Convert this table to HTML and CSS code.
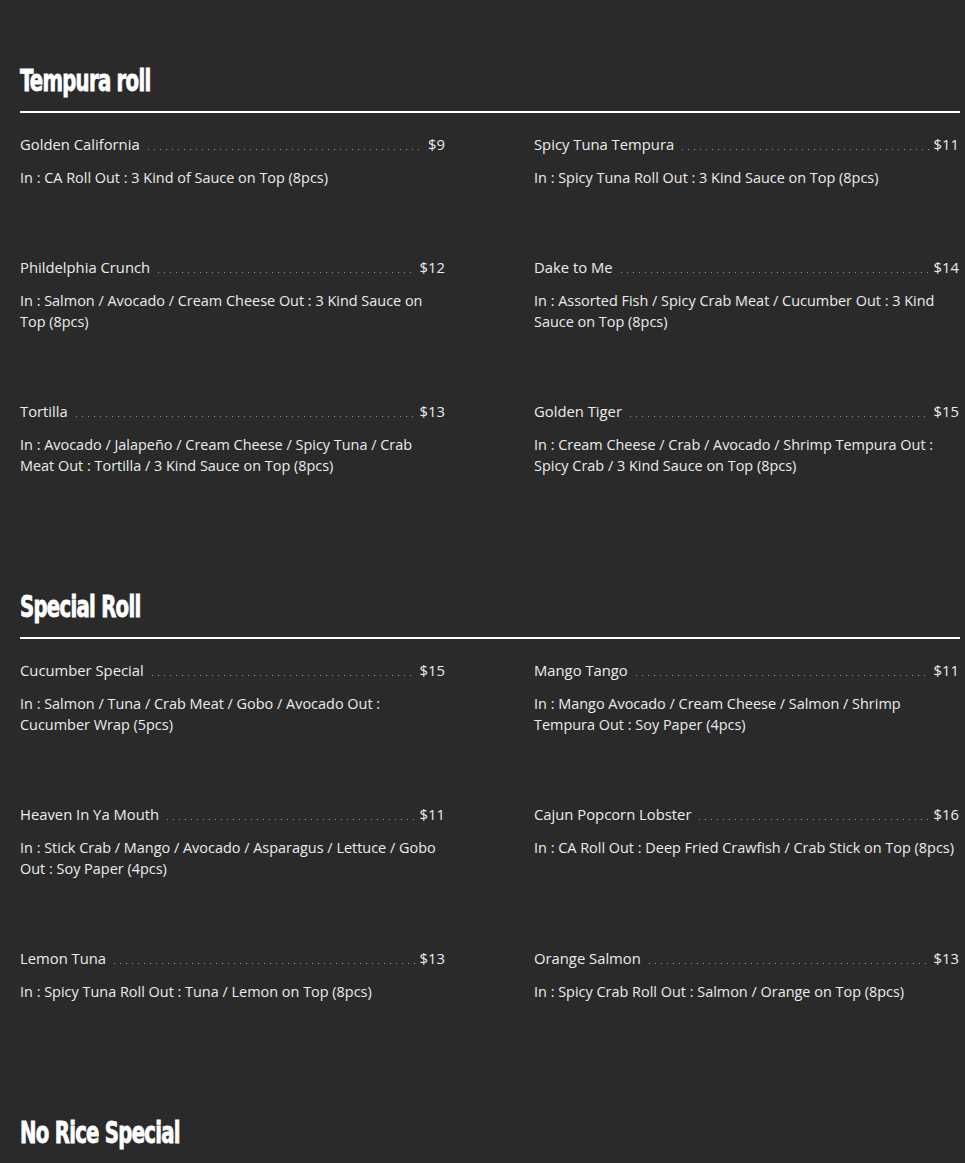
FILE: index.html
```html
<!DOCTYPE html>
<html lang="en">
<head>
  <meta charset="UTF-8">
  <title>Menu</title>
  <link rel="stylesheet" href="styles.css">
</head>
<body>
  <div class="menu">

    <!-- Tempura roll -->
    <section class="section">
      <h2 class="section-title"><span class="title-text">Tempura roll</span></h2>
      <div class="items">
        <div class="item">
          <div class="item-head"><span class="name">Golden California</span><span class="dots"></span><span class="price">$9</span></div>
          <p class="desc">In : CA Roll Out : 3 Kind of Sauce on Top (8pcs)</p>
        </div>
        <div class="item">
          <div class="item-head"><span class="name">Spicy Tuna Tempura</span><span class="dots"></span><span class="price">$11</span></div>
          <p class="desc">In : Spicy Tuna Roll Out : 3 Kind Sauce on Top (8pcs)</p>
        </div>
        <div class="item">
          <div class="item-head"><span class="name">Phildelphia Crunch</span><span class="dots"></span><span class="price">$12</span></div>
          <p class="desc">In : Salmon / Avocado / Cream Cheese Out : 3 Kind Sauce on Top (8pcs)</p>
        </div>
        <div class="item">
          <div class="item-head"><span class="name">Dake to Me</span><span class="dots"></span><span class="price">$14</span></div>
          <p class="desc">In : Assorted Fish / Spicy Crab Meat / Cucumber Out : 3 Kind Sauce on Top (8pcs)</p>
        </div>
        <div class="item">
          <div class="item-head"><span class="name">Tortilla</span><span class="dots"></span><span class="price">$13</span></div>
          <p class="desc">In : Avocado / Jalapeño / Cream Cheese / Spicy Tuna / Crab Meat Out : Tortilla / 3 Kind Sauce on Top (8pcs)</p>
        </div>
        <div class="item">
          <div class="item-head"><span class="name">Golden Tiger</span><span class="dots"></span><span class="price">$15</span></div>
          <p class="desc">In : Cream Cheese / Crab / Avocado / Shrimp Tempura Out : Spicy Crab / 3 Kind Sauce on Top (8pcs)</p>
        </div>
      </div>
    </section>

    <!-- Special Roll -->
    <section class="section">
      <h2 class="section-title"><span class="title-text">Special Roll</span></h2>
      <div class="items">
        <div class="item">
          <div class="item-head"><span class="name">Cucumber Special</span><span class="dots"></span><span class="price">$15</span></div>
          <p class="desc">In : Salmon / Tuna / Crab Meat / Gobo / Avocado Out : Cucumber Wrap (5pcs)</p>
        </div>
        <div class="item">
          <div class="item-head"><span class="name">Mango Tango</span><span class="dots"></span><span class="price">$11</span></div>
          <p class="desc">In : Mango Avocado / Cream Cheese / Salmon / Shrimp Tempura Out : Soy Paper (4pcs)</p>
        </div>
        <div class="item">
          <div class="item-head"><span class="name">Heaven In Ya Mouth</span><span class="dots"></span><span class="price">$11</span></div>
          <p class="desc">In : Stick Crab / Mango / Avocado / Asparagus / Lettuce / Gobo Out : Soy Paper (4pcs)</p>
        </div>
        <div class="item">
          <div class="item-head"><span class="name">Cajun Popcorn Lobster</span><span class="dots"></span><span class="price">$16</span></div>
          <p class="desc">In : CA Roll Out : Deep Fried Crawfish / Crab Stick on Top (8pcs)</p>
        </div>
        <div class="item">
          <div class="item-head"><span class="name">Lemon Tuna</span><span class="dots"></span><span class="price">$13</span></div>
          <p class="desc">In : Spicy Tuna Roll Out : Tuna / Lemon on Top (8pcs)</p>
        </div>
        <div class="item">
          <div class="item-head"><span class="name">Orange Salmon</span><span class="dots"></span><span class="price">$13</span></div>
          <p class="desc">In : Spicy Crab Roll Out : Salmon / Orange on Top (8pcs)</p>
        </div>
      </div>
    </section>

    <!-- No Rice Special -->
    <section class="section">
      <h2 class="section-title"><span class="title-text">No Rice Special</span></h2>
    </section>

  </div>
</body>
</html>
```

FILE: styles.css
```css
body {
  margin: 0;
  padding: 0;
  background: #2a2a2a;
  color: #ececec;
  font-family: 'Open Sans', 'Noto Sans', sans-serif;
  font-size: 14.45px;
}

.menu {
  padding: 66px 5px 0 20px;
}

.section {
  margin-bottom: 47px;
}

.section-title {
  margin: 0;
  padding-bottom: 15px;
  border-bottom: 2px solid #fff;
  font-family: 'DejaVu Sans Condensed', 'DejaVu Sans', sans-serif;
  font-weight: bold;
  font-size: 30px;
  line-height: 30px;
  letter-spacing: -1px;
  color: #fff;
}

/* condensed face is still too wide, squeeze it toward an Impact look */
.title-text {
  display: inline-block;
  transform: scaleX(0.73);
  transform-origin: left center;
  -webkit-text-stroke: 0.8px #fff;
}

.items {
  display: grid;
  grid-template-columns: 425px 425px;
  column-gap: 89px;
  row-gap: 69px;
  padding-top: 21px;
  padding-bottom: 69px;
}

.item-head {
  display: flex;
  align-items: baseline;
  line-height: 21px;
}

.name {
  font-size: 14.8px;
}

.dots {
  flex: 1;
  height: 1px;
  margin: 0 5px 0 8px;
  background-image: linear-gradient(to right, #9a9a9a 1px, transparent 1px);
  background-size: 6px 1px;
  background-repeat: repeat-x;
}

.price {
  font-size: 14.8px;
}

.desc {
  margin: 12px 0 0;
  line-height: 21px;
}
```
